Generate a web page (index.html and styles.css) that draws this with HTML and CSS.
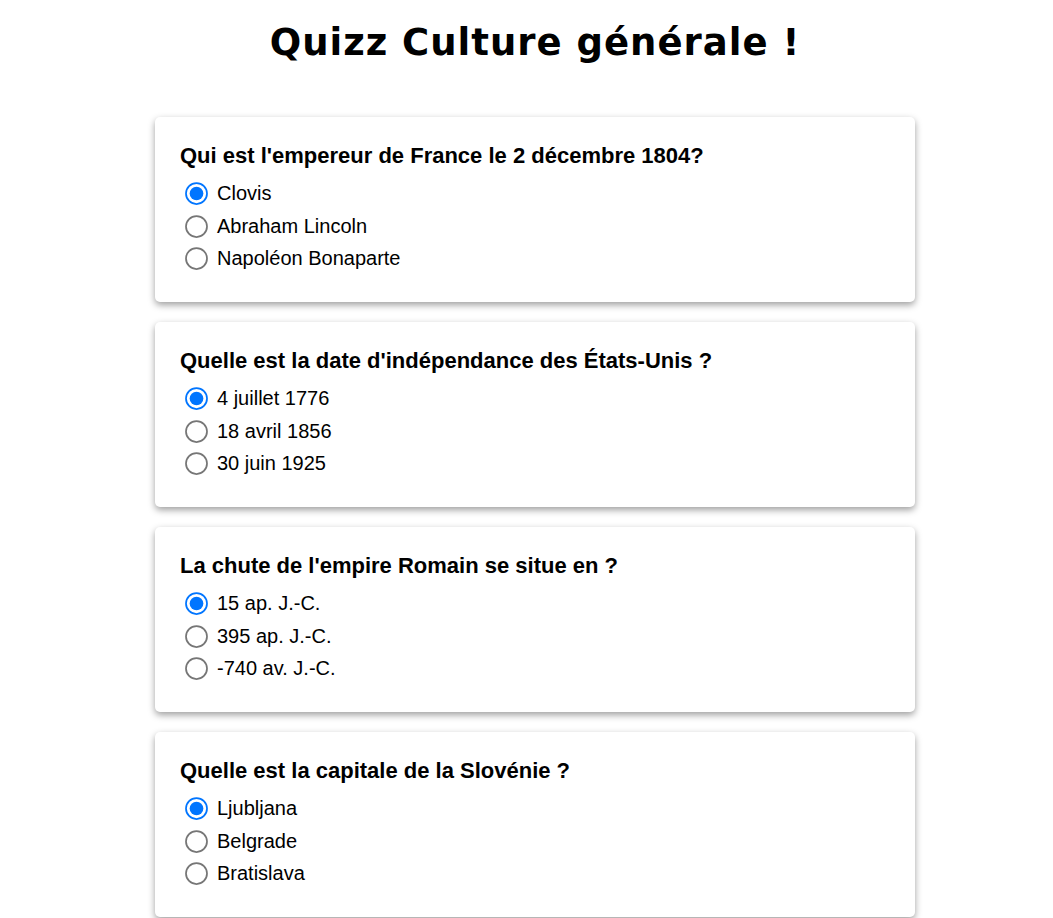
FILE: index.html
```html
<!DOCTYPE html>
<html lang="fr">
<head>
<meta charset="utf-8">
<title>Quizz</title>
<link rel="stylesheet" href="styles.css">
</head>
<body>
<h1 class="title">Quizz Culture générale !</h1>
<main class="quiz">
  <section class="card">
    <h2 class="question">Qui est l'empereur de France le 2 décembre 1804?</h2>
    <label class="option"><input type="radio" name="q1" checked> Clovis</label>
    <label class="option"><input type="radio" name="q1"> Abraham Lincoln</label>
    <label class="option"><input type="radio" name="q1"> Napoléon Bonaparte</label>
  </section>
  <section class="card">
    <h2 class="question">Quelle est la date d'indépendance des États-Unis ?</h2>
    <label class="option"><input type="radio" name="q2" checked> 4 juillet 1776</label>
    <label class="option"><input type="radio" name="q2"> 18 avril 1856</label>
    <label class="option"><input type="radio" name="q2"> 30 juin 1925</label>
  </section>
  <section class="card">
    <h2 class="question">La chute de l'empire Romain se situe en ?</h2>
    <label class="option"><input type="radio" name="q3" checked> 15 ap. J.-C.</label>
    <label class="option"><input type="radio" name="q3"> 395 ap. J.-C.</label>
    <label class="option"><input type="radio" name="q3"> -740 av. J.-C.</label>
  </section>
  <section class="card">
    <h2 class="question">Quelle est la capitale de la Slovénie ?</h2>
    <label class="option"><input type="radio" name="q4" checked> Ljubljana</label>
    <label class="option"><input type="radio" name="q4"> Belgrade</label>
    <label class="option"><input type="radio" name="q4"> Bratislava</label>
  </section>
</main>
</body>
</html>
```
FILE: styles.css
```css
html, body {
  margin: 0;
  background: #ffffff;
}
body {
  padding: 0 0 40px 17px;
  font-family: "Liberation Sans", Arial, sans-serif;
  color: #000;
}
.title {
  margin: 0;
  padding: 20px 0 0;
  height: 117px;
  box-sizing: border-box;
  text-align: center;
  font-family: "DejaVu Sans", sans-serif;
  font-weight: bold;
  font-size: 37px;
  letter-spacing: 1px;
  line-height: 46px;
}
.quiz {
  width: 760px;
  margin: 0 auto;
  display: flex;
  flex-direction: column;
  gap: 20px;
}
.card {
  background: #fff;
  border-radius: 5px;
  box-shadow: 0 3px 7px rgba(0, 0, 0, 0.38);
  padding: 26px 25px 27px;
  height: 185px;
  box-sizing: border-box;
  display: flex;
  flex-direction: column;
}
.question {
  margin: 0 0 9px;
  font-size: 22px;
  line-height: 25px;
  font-weight: bold;
}
.option {
  display: flex;
  align-items: center;
  height: 33px;
  font-size: 20px;
}
.option input {
  width: 13px;
  height: 13px;
  margin: 0 14px 0 10px;
  transform: scale(1.75);
  accent-color: #0075ff;
}
```
